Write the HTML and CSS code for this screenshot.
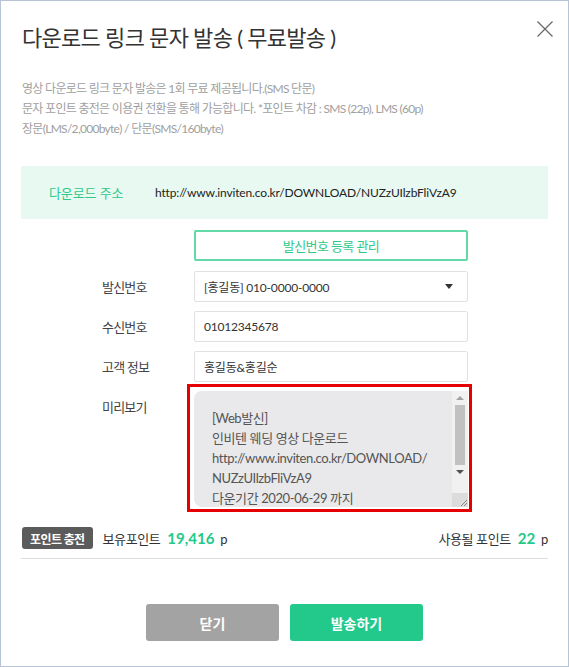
FILE: index.html
```html
<!DOCTYPE html>
<html lang="ko">
<head>
  <meta charset="UTF-8">
  <meta name="viewport" content="width=device-width, initial-scale=1.0">
  <title>다운로드 링크 문자 발송</title>
  <link rel="stylesheet" href="styles.css">
</head>
<body>
  <div class="modal">
    <header class="modal-head">
      <h1>다운로드 링크 문자 발송 ( 무료발송 )</h1>
      <button class="close" aria-label="닫기">
        <svg width="16" height="16" viewBox="0 0 16 16"><path d="M0.5 0.5L15.5 15.5M15.5 0.5L0.5 15.5" stroke="#666" stroke-width="1.2" fill="none"/></svg>
      </button>
    </header>

    <div class="notice">
      <p>영상 다운로드 링크 문자 발송은 1회 무료 제공됩니다.(SMS 단문)</p>
      <p>문자 포인트 충전은 이용권 전환을 통해 가능합니다. *포인트 차감 : SMS (22p), LMS (60p)</p>
      <p>장문(LMS/2,000byte) / 단문(SMS/160byte)</p>
    </div>

    <div class="address">
      <span class="address-label">다운로드 주소</span>
      <span class="address-url">http://www.inviten.co.kr/DOWNLOAD/NUZzUIlzbFliVzA9</span>
    </div>

    <div class="form">
      <span></span>
      <button class="btn-outline">발신번호 등록 관리</button>

      <label>발신번호</label>
      <div class="field select">
        <span>[홍길동] 010-0000-0000</span>
        <span class="caret"></span>
      </div>

      <label>수신번호</label>
      <div class="field">01012345678</div>

      <label>고객 정보</label>
      <div class="field">홍길동&amp;홍길순</div>

      <label class="label-top">미리보기</label>
      <div class="highlight">
        <div class="preview">
          <div class="preview-text">[Web발신]
인비텐 웨딩 영상 다운로드
http://www.inviten.co.kr/DOWNLOAD/
NUZzUIlzbFliVzA9
다운기간 2020-06-29 까지</div>
          <div class="scrollbar">
            <span class="arrow up"></span>
            <span class="thumb"></span>
            <span class="arrow down"></span>
            <span class="grip">
              <svg width="10" height="10" viewBox="0 0 10 10"><path d="M9 3L3 9M9 6L6 9" stroke="#888" stroke-width="1" fill="none"/></svg>
            </span>
          </div>
        </div>
      </div>
    </div>

    <div class="points">
      <div class="points-left">
        <span class="badge">포인트 충전</span>
        <span class="points-label">보유포인트</span>
        <span><b class="green">19,416</b> p</span>
      </div>
      <div class="points-right">
        <span>사용될 포인트</span>
        <span><b class="green">22</b> p</span>
      </div>
    </div>

    <div class="actions">
      <button class="btn btn-gray">닫기</button>
      <button class="btn btn-green">발송하기</button>
    </div>
  </div>
</body>
</html>
```

FILE: styles.css
```css
* {
  margin: 0;
  padding: 0;
  box-sizing: border-box;
}
body {
  font-family: Lato, "Noto Sans CJK KR", sans-serif;
  color: #333;
  background: #fff;
}
button {
  font-family: inherit;
  border: none;
  background: none;
  cursor: pointer;
}
.modal {
  width: 569px;
  height: 667px;
  border: 1px solid #b7c4d5;
  padding: 0 20px;
}
.modal-head {
  display: flex;
  justify-content: space-between;
  align-items: flex-start;
  padding-top: 20px;
}
.modal-head h1 {
  font-size: 22px;
  font-weight: 400;
  line-height: 34px;
  letter-spacing: -0.7px;
  color: #333;
  padding-left: 1px;
}
.close {
  width: 16px;
  height: 16px;
  margin-right: -5px;
  display: flex;
}
.notice {
  margin-top: 24px;
  padding-left: 1px;
  font-size: 12px;
  line-height: 20px;
  letter-spacing: -0.7px;
  color: #a0a0a0;
}
.address {
  margin-top: 27px;
  height: 53px;
  padding: 0 28px;
  display: flex;
  align-items: center;
  background: #e8f9f2;
}
.address-label {
  width: 106px;
  flex-shrink: 0;
  font-size: 13px;
  letter-spacing: -0.1px;
  color: #2fc98a;
}
.address-url {
  font-size: 12px;
  letter-spacing: -0.15px;
  color: #222;
}
.form {
  margin-top: 11px;
  padding-left: 81px;
  display: grid;
  grid-template-columns: 92px 274px;
  row-gap: 9px;
  align-items: center;
}
.form label {
  font-size: 13px;
  letter-spacing: -0.8px;
  color: #444;
}
.form .label-top {
  align-self: start;
  padding-top: 6px;
}
.btn-outline {
  height: 31px;
  margin-bottom: 1px;
  border: 2px solid #62d9a6;
  border-radius: 2px;
  font-size: 13px;
  letter-spacing: -0.6px;
  color: #2fc98a;
}
.field {
  height: 31px;
  padding: 0 9px;
  border: 1px solid #e1e1e1;
  border-radius: 2px;
  display: flex;
  align-items: center;
  font-size: 12px;
  letter-spacing: -0.2px;
  color: #333;
}
.select {
  justify-content: space-between;
  padding-right: 14px;
}
.caret {
  width: 0;
  height: 0;
  border-left: 4px solid transparent;
  border-right: 4px solid transparent;
  border-top: 5px solid #333;
}
.highlight {
  margin: -7px -4px -5px -7px;
  padding: 4px 1px 2px 4px;
  border: 3px solid #e60000;
}
.preview {
  height: 116px;
  display: flex;
  background: #e9e9eb;
  border-radius: 8px 0 0 8px;
  overflow: hidden;
}
.preview-text {
  flex: 1;
  padding: 17px 0 0 18px;
  white-space: pre-line;
  font-size: 13px;
  line-height: 20px;
  letter-spacing: -0.4px;
  color: #555;
}
.scrollbar {
  width: 16px;
  background: #f1f1f1;
  display: flex;
  flex-direction: column;
  align-items: center;
}
.arrow {
  width: 0;
  height: 0;
  margin: 5px 0;
  border-left: 4px solid transparent;
  border-right: 4px solid transparent;
}
.arrow.up {
  border-bottom: 4px solid #a3a3a3;
}
.arrow.down {
  border-top: 4px solid #505050;
}
.thumb {
  width: 10px;
  height: 60px;
  background: #c1c1c1;
}
.grip {
  margin-top: auto;
  width: 16px;
  height: 14px;
  background: #dcdcdc;
  display: flex;
  align-items: flex-end;
  justify-content: flex-end;
}
.points {
  margin-top: 20px;
  padding: 0 0 9px 1px;
  border-bottom: 1px solid #dedede;
  display: flex;
  justify-content: space-between;
  align-items: center;
  font-size: 13px;
  letter-spacing: -0.4px;
  color: #333;
}
.points-left,
.points-right {
  display: flex;
  align-items: center;
  gap: 7px;
}
.badge {
  height: 22px;
  padding: 0 8px;
  margin-right: 3px;
  display: flex;
  align-items: center;
  border-radius: 3px;
  background: #5b5b5b;
  color: #fff;
  font-size: 12px;
  font-weight: 700;
  letter-spacing: -0.6px;
}
.green {
  color: #23c98b;
  font-weight: 700;
  font-size: 15px;
  letter-spacing: 0;
  margin-right: 3px;
}
.actions {
  margin-top: 45px;
  display: flex;
  justify-content: center;
  gap: 11px;
}
.btn {
  width: 133px;
  height: 37px;
  border-radius: 3px;
  font-size: 14px;
  font-weight: 700;
  color: #fff;
}
.btn-gray {
  background: #a3a3a3;
}
.btn-green {
  background: #23c98b;
}
```
